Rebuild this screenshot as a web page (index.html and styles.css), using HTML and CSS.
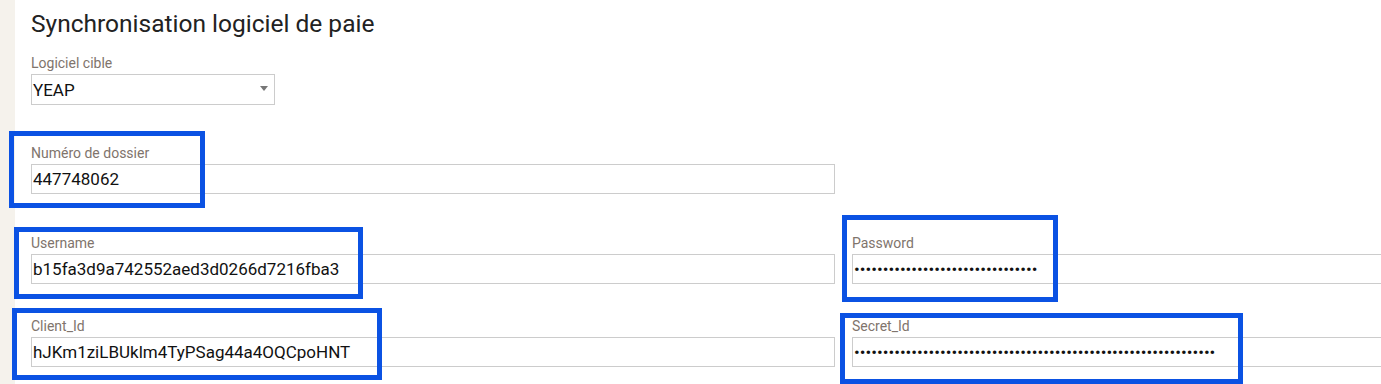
FILE: index.html
```html
<!DOCTYPE html>
<html lang="fr">
<head>
<meta charset="utf-8">
<title>Synchronisation logiciel de paie</title>
<link rel="stylesheet" href="styles.css">
</head>
<body>
<div class="page">
  <aside class="side"></aside>
  <main class="content">
    <h1 class="title">Synchronisation logiciel de paie</h1>

    <div class="field field-select">
      <label class="label">Logiciel cible</label>
      <div class="select">
        <span class="select-value">YEAP</span>
        <span class="caret"></span>
      </div>
    </div>

    <div class="row row-dossier">
      <div class="field">
        <label class="label">Numéro de dossier</label>
        <input class="input" type="text" value="447748062">
      </div>
    </div>

    <div class="row row-user">
      <div class="field">
        <label class="label">Username</label>
        <input class="input" type="text" value="b15fa3d9a742552aed3d0266d7216fba3">
      </div>
      <div class="field">
        <label class="label">Password</label>
        <input class="input" type="password" value="abcdefghijabcdefghijabcdefghijab">
      </div>
    </div>

    <div class="row row-client">
      <div class="field">
        <label class="label">Client_Id</label>
        <input class="input" type="text" value="hJKm1ziLBUklm4TyPSag44a4OQCpoHNT">
      </div>
      <div class="field">
        <label class="label">Secret_Id</label>
        <input class="input" type="password" value="abcdefghijabcdefghijabcdefghijabcdefghijabcdefghijabcdefghijabc">
      </div>
    </div>
  </main>

  <div class="mark mark-dossier"></div>
  <div class="mark mark-user"></div>
  <div class="mark mark-client"></div>
  <div class="mark mark-password"></div>
  <div class="mark mark-secret"></div>
</div>
</body>
</html>
```

FILE: styles.css
```css
html, body {
  margin: 0;
  padding: 0;
  background: #ffffff;
  overflow: hidden;
}

.page {
  position: relative;
  display: flex;
  width: 1381px;
  height: 384px;
  overflow: hidden;
  font-family: Roboto, "Liberation Sans", sans-serif;
}

.side {
  flex: 0 0 15px;
  background: #f5f2ec;
}

.content {
  flex: 0 0 auto;
  padding-left: 16px;
}

.title {
  margin: 0;
  padding-top: 9px;
  font-size: 24.5px;
  line-height: 30px;
  font-weight: 400;
  color: #222222;
}

.field {
  display: flex;
  flex-direction: column;
  width: 804px;
}

.label {
  display: block;
  font-size: 14px;
  line-height: 16px;
  color: #80746c;
  margin-bottom: 3px;
}

.field-select {
  margin-top: 16px;
}

.select {
  box-sizing: border-box;
  width: 244px;
  height: 31px;
  border: 1px solid #cccccc;
  display: flex;
  align-items: center;
  justify-content: space-between;
  padding: 0 6px 0 1px;
  font-size: 17px;
  color: #111111;
}

.caret {
  width: 0;
  height: 0;
  border-left: 4px solid transparent;
  border-right: 4px solid transparent;
  border-top: 5px solid #777777;
  margin-top: -2px;
}

.row {
  display: flex;
  gap: 17px;
}

.row-dossier {
  margin-top: 40px;
}

.row-user {
  margin-top: 41px;
}

.row-client {
  margin-top: 34px;
}

.input {
  box-sizing: border-box;
  width: 804px;
  height: 30px;
  margin: 0;
  padding: 0 1px;
  border: 1px solid #cccccc;
  border-radius: 0;
  outline: none;
  background: #ffffff;
  font-family: Roboto, "Liberation Sans", sans-serif;
  font-size: 17px;
  color: #111111;
}

.input[type="password"] {
  font-size: 17px;
  letter-spacing: 0;
}

.mark {
  position: absolute;
  box-sizing: border-box;
  border: 5px solid #0b52e3;
  pointer-events: none;
}

.mark-dossier { left: 9px;   top: 131px; width: 196px; height: 77px; }
.mark-user    { left: 14px;  top: 227px; width: 349px; height: 72px; }
.mark-client  { left: 12px;  top: 308px; width: 370px; height: 72px; }
.mark-password{ left: 842px; top: 215px; width: 216px; height: 87px; }
.mark-secret  { left: 840px; top: 313px; width: 403px; height: 71px; }
```
